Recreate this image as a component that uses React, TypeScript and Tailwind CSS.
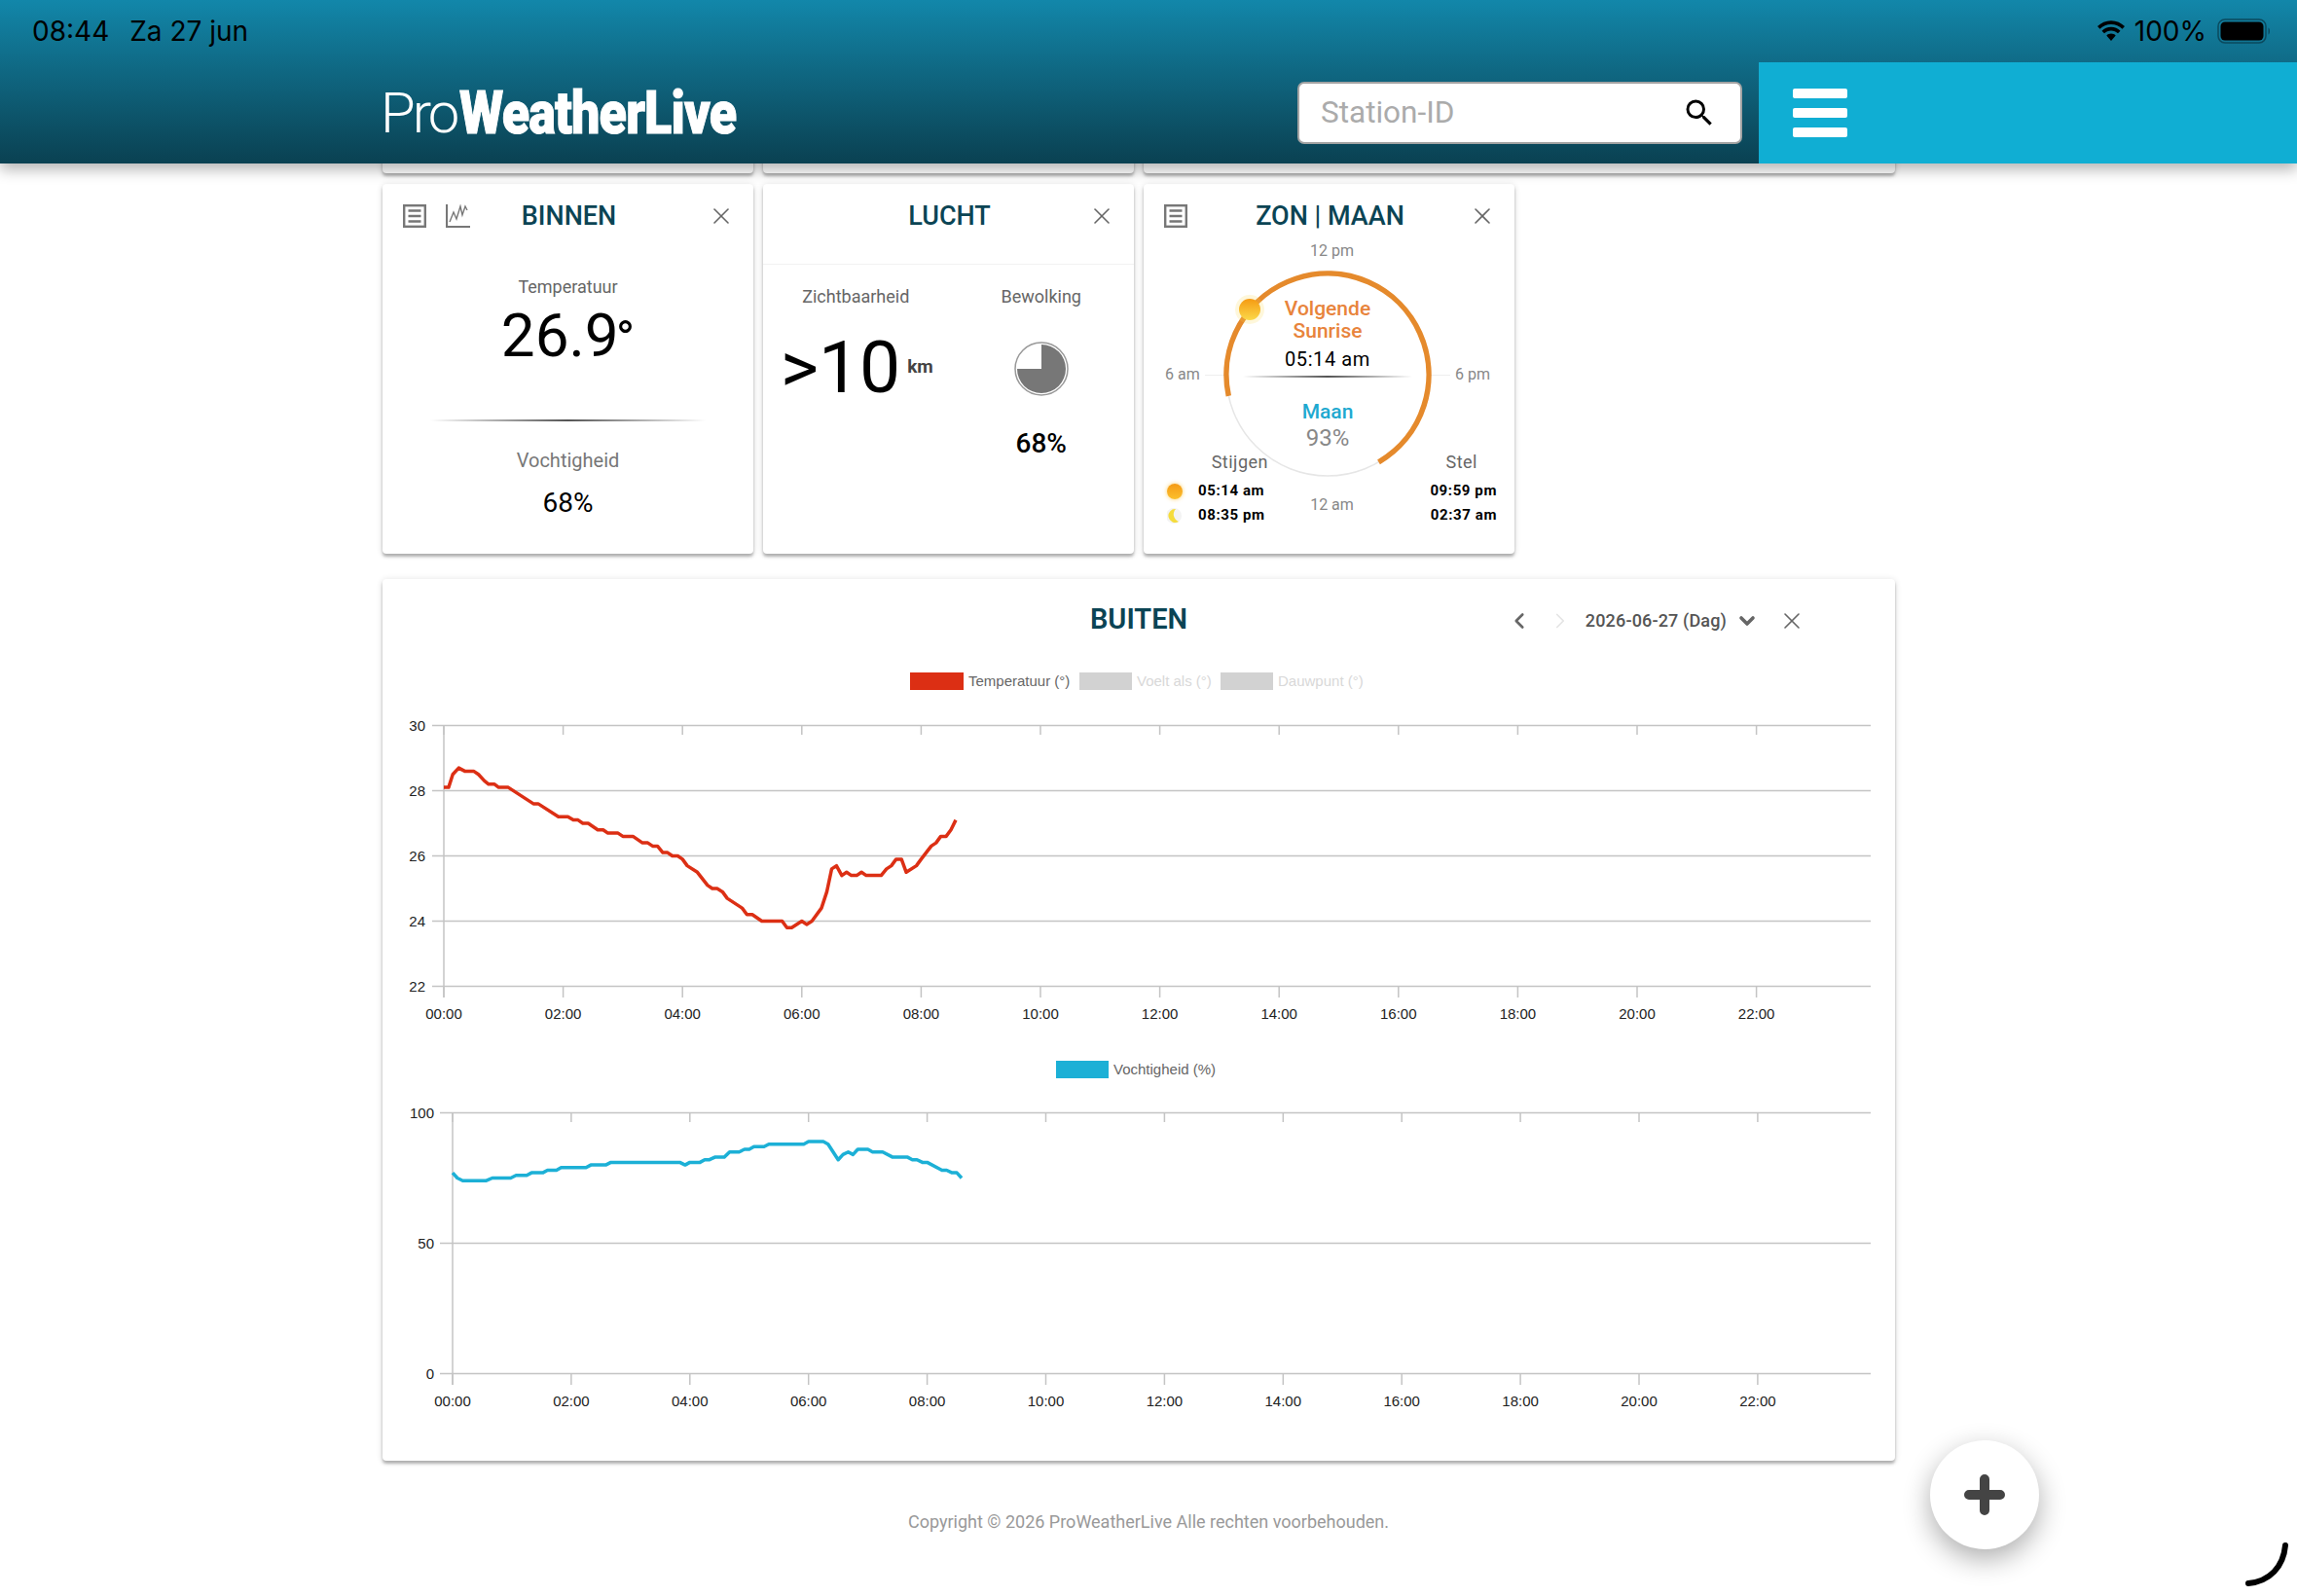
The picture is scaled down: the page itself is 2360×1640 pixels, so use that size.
import { X, ChevronLeft, ChevronRight, ChevronDown } from "lucide-react"
import { MdSearch } from "react-icons/md"

const tempData: [number, number][] = [
  [0, 28.1], [0.08, 28.1], [0.15, 28.5], [0.25, 28.7], [0.35, 28.6], [0.5, 28.6], [0.58, 28.5], [0.68, 28.3], [0.75, 28.2], [0.85, 28.2],
  [0.92, 28.1], [1.08, 28.1], [1.5, 27.6], [1.58, 27.6], [1.92, 27.2], [2.08, 27.2], [2.17, 27.1], [2.25, 27.1], [2.33, 27], [2.42, 27],
  [2.58, 26.8], [2.67, 26.8], [2.75, 26.7], [2.92, 26.7], [3, 26.6], [3.17, 26.6], [3.33, 26.4], [3.42, 26.4], [3.5, 26.3], [3.58, 26.3],
  [3.67, 26.1], [3.75, 26.1], [3.83, 26], [3.92, 26], [4, 25.9], [4.08, 25.7], [4.25, 25.5], [4.42, 25.1], [4.5, 25], [4.58, 25],
  [4.67, 24.9], [4.75, 24.7], [5, 24.4], [5.08, 24.2], [5.17, 24.2], [5.33, 24], [5.67, 24], [5.75, 23.8], [5.83, 23.8], [6, 24],
  [6.08, 23.9], [6.17, 24], [6.33, 24.4], [6.42, 24.9], [6.5, 25.6], [6.58, 25.7], [6.67, 25.4], [6.75, 25.5], [6.83, 25.4], [6.92, 25.4],
  [7, 25.5], [7.08, 25.4], [7.33, 25.4], [7.42, 25.6], [7.5, 25.7], [7.58, 25.9], [7.67, 25.9], [7.75, 25.5], [7.92, 25.7], [8, 25.9],
  [8.17, 26.3], [8.25, 26.4], [8.33, 26.6], [8.42, 26.6], [8.5, 26.8], [8.58, 27.1],
]

const humidityData: [number, number][] = [
  [0, 77], [0.08, 75], [0.17, 74], [0.57, 74], [0.67, 75], [0.98, 75], [1.07, 76], [1.25, 76], [1.33, 77], [1.52, 77],
  [1.6, 78], [1.75, 78], [1.83, 79], [2.25, 79], [2.33, 80], [2.58, 80], [2.67, 81], [3.83, 81], [3.92, 80], [4, 81],
  [4.17, 81], [4.25, 82], [4.33, 82], [4.42, 83], [4.58, 83], [4.67, 85], [4.83, 85], [4.92, 86], [5, 86], [5.08, 87],
  [5.25, 87], [5.33, 88], [5.92, 88], [6, 89], [6.25, 89], [6.33, 88], [6.5, 82], [6.58, 84], [6.67, 85], [6.75, 84],
  [6.83, 86], [7, 86], [7.08, 85], [7.25, 85], [7.42, 83], [7.67, 83], [7.75, 82], [7.83, 82], [7.92, 81], [8, 81],
  [8.25, 78], [8.33, 78], [8.42, 77], [8.5, 77], [8.58, 75],
]

const hourLabels = ["00:00", "02:00", "04:00", "06:00", "08:00", "10:00", "12:00", "14:00", "16:00", "18:00", "20:00", "22:00"]

const cardClass =
  "rounded-[4px] bg-white shadow-[0_3px_3px_0_rgba(0,0,0,0.26),0_1px_7px_0_rgba(0,0,0,0.14)]"

function DocIcon() {
  return (
    <svg width="24" height="24" viewBox="0 0 24 24" fill="none" stroke="#777" strokeWidth="2.4">
      <rect x="1.200" y="1.200" width="21.600" height="21.600" />
      <path d="M5.500 6.500h13M5.500 12h13M5.500 17.500h13" />
    </svg>
  )
}

function GraphIcon() {
  return (
    <svg width="25" height="24" viewBox="0 0 25 24" fill="none" stroke="#777">
      <path d="M1 0v23h24" strokeWidth="2.2" />
      <path d="M4 18l4-10 3 7 4-13 2 9 3-9 2 4" strokeWidth="1.4" />
    </svg>
  )
}

function CardHeader({ title, icons }: { title: string; icons?: React.ReactNode }) {
  return (
    <div className="grid h-[66px] grid-cols-[1fr_auto_1fr] items-center pl-[21px] pr-[19px]">
      <div className="flex items-center gap-[20px]">{icons}</div>
      <h2 className="text-[27px] leading-none font-medium text-[#0b4454]">{title}</h2>
      <div className="flex justify-end">
        <X size={28} strokeWidth={1.4} color="#666" />
      </div>
    </div>
  )
}

function BinnenCard() {
  return (
    <section className={`${cardClass} h-[380px]`}>
      <CardHeader title="BINNEN" icons={<><DocIcon /><GraphIcon /></>} />
      <div className="flex flex-col items-center pt-[29px]">
        <p className="text-[18px] leading-[22px] text-[#666]">Temperatuur</p>
        <p className="mt-[9px] text-[62px] leading-[60px] text-black">
          26.9<span className="-ml-[3px] text-[52px]">°</span>
        </p>
        <div className="mt-[52px] h-[2px] w-[283px] bg-gradient-to-r from-transparent via-[#555] to-transparent" />
        <p className="mt-[29px] text-[20px] leading-[22px] text-[#777]">Vochtigheid</p>
        <p className="mt-[17px] text-[28px] leading-[32px] text-black">68%</p>
      </div>
    </section>
  )
}

function LuchtCard() {
  return (
    <section className={`${cardClass} h-[380px]`}>
      <div className="h-[83px] border-b border-[#f2f2f2]">
        <CardHeader title="LUCHT" />
      </div>
      <div className="grid grid-cols-2 pt-[22px]">
        <div className="flex flex-col items-center">
          <p className="text-[18px] leading-[22px] text-[#666]">Zichtbaarheid</p>
          <div className="mt-[23px] flex items-center gap-[7px] pl-[2px]">
            <span className="text-[75px] leading-[76px] text-black">&gt;10</span>
            <span className="text-[19px] font-bold text-[#444]">km</span>
          </div>
        </div>
        <div className="flex flex-col items-center">
          <p className="text-[18px] leading-[22px] text-[#666]">Bewolking</p>
          <svg className="mt-[35px]" width="56" height="56" viewBox="-28 -28 56 56">
            <circle r="27" fill="#fff" stroke="#999" strokeWidth="1.5" />
            <path d="M0 0V-25A25 25 0 1 1 -25 0Z" fill="#777" />
          </svg>
          <p className="mt-[33px] text-[28px] leading-[32px] font-medium text-black">68%</p>
        </div>
      </div>
    </section>
  )
}

function SunDial() {
  return (
    <div className="relative flex h-[210px] w-[210px] flex-col items-center">
      <svg className="absolute inset-0 overflow-visible" width="210" height="210" viewBox="-105 -105 210 210">
        <defs>
          <linearGradient id="sunFill" x1="0" y1="0" x2="0" y2="1">
            <stop offset="0" stopColor="#f59a12" />
            <stop offset="1" stopColor="#fbd94a" />
          </linearGradient>
        </defs>
        <circle r="104" fill="none" stroke="#e6e6e6" strokeWidth="1.5" />
        <path d="M-101.700 21.900A104 104 0 1 1 52.500 89.800" fill="none" stroke="#e58a2c" strokeWidth="5.500" />
        <circle cx="-80" cy="-67" r="15" fill="#fbd94a" opacity="0.2" />
        <circle cx="-80" cy="-67" r="11" fill="url(#sunFill)" />
      </svg>
      <p className="relative mt-[26px] text-center text-[21px] leading-[23px] font-medium text-[#e8843c]">
        Volgende
        <br />
        Sunrise
      </p>
      <p className="relative mt-[4px] text-[20px] leading-[26px] tracking-[0.6px] text-black">05:14 am</p>
      <div className="relative mt-[4px] h-[1.5px] w-[174px] bg-gradient-to-r from-transparent via-[#555] to-transparent" />
      <p className="relative mt-[23px] text-[21px] leading-[24px] font-medium text-[#1fa9d0]">Maan</p>
      <p className="relative text-[24px] leading-[30px] text-[#888]">93%</p>
    </div>
  )
}

function SunMoonCard() {
  return (
    <section className={`${cardClass} flex h-[380px] flex-col`}>
      <CardHeader title="ZON | MAAN" icons={<DocIcon />} />
      <p className="-mt-[7px] pl-[6px] text-center text-[16px] leading-[20px] text-[#888]">12 pm</p>
      <div className="mt-[12px] flex items-center">
        <div className="flex flex-1 items-center gap-[5px] pl-[22px]">
          <span className="text-[16px] text-[#888]">6 am</span>
          <span className="h-px flex-1 bg-[#eee]" />
        </div>
        <SunDial />
        <div className="flex flex-1 items-center gap-[5px] pr-[25px]">
          <span className="h-px flex-1 bg-[#eee]" />
          <span className="text-[16px] text-[#888]">6 pm</span>
        </div>
      </div>
      <div className="relative -mt-[26px] grid grid-cols-[1fr_auto_1fr] pl-[24px] pr-[18px]">
        <div>
          <p className="w-[104px] text-right text-[18px] leading-[22px] tracking-[0.5px] text-[#666]">Stijgen</p>
          <div className="mt-[6px] flex h-[25px] items-center gap-[16px]">
            <span className="h-[16px] w-[16px] rounded-full bg-gradient-to-b from-[#f59a12] to-[#fbc02d] shadow-[0_0_4px_rgba(251,190,40,0.7)]" />
            <span className="text-[15px] font-bold tracking-[0.6px] text-black">05:14 am</span>
          </div>
          <div className="flex h-[25px] items-center gap-[16px]">
            <svg width="16" height="16" viewBox="0 0 16 16">
              <circle cx="7" cy="8" r="8" fill="#e8e8e8" opacity="0.5" />
              <path d="M9 1A7 7 0 1 0 12 14A8 8 0 0 1 9 1Z" fill="#f5dc3c" />
            </svg>
            <span className="text-[15px] font-bold tracking-[0.6px] text-black">08:35 pm</span>
          </div>
        </div>
        <p className="mb-[13px] self-end text-[16px] leading-[20px] text-[#888]">12 am</p>
        <div className="flex flex-col items-end">
          <p className="pr-[20px] text-[18px] leading-[22px] tracking-[0.5px] text-[#666]">Stel</p>
          <p className="mt-[6px] flex h-[25px] items-center text-[15px] font-bold tracking-[0.6px] text-black">09:59 pm</p>
          <p className="flex h-[25px] items-center text-[15px] font-bold tracking-[0.6px] text-black">02:37 am</p>
        </div>
      </div>
    </section>
  )
}

type LegendItem = { x: number; w: number; label: string; color: string; text: string }

function Chart({
  top,
  height,
  plotLeft,
  axisLeft,
  pitch,
  yTop,
  yBottom,
  yTicks,
  yLabelX,
  legend,
  legendY,
  data,
  toY,
  color,
}: {
  top: number
  height: number
  plotLeft: number
  axisLeft: number
  pitch: number
  yTop: number
  yBottom: number
  yTicks: { y: number; label: string }[]
  yLabelX: number
  legend: LegendItem[]
  legendY: number
  data: [number, number][]
  toY: (v: number) => number
  color: string
}) {
  const points = data.map(([h, v]) => `${(plotLeft + (h * pitch) / 2).toFixed(1)},${toY(v).toFixed(1)}`).join(" ")
  const tickXs = hourLabels.map((_, i) => plotLeft + i * pitch)
  return (
    <svg className="block" width="1554" height={height} viewBox={`393 ${top} 1554 ${height}`} fontFamily="'Liberation Sans', Arial, sans-serif">
      {legend.map((l) => (
        <g key={l.label}>
          <rect x={l.x} y={legendY} width={l.w} height="18" fill={l.color} />
          <text x={l.x + l.w + 5} y={legendY + 14} fontSize="15" fill={l.text}>
            {l.label}
          </text>
        </g>
      ))}
      {yTicks.map((t) => (
        <g key={t.label}>
          <line x1={axisLeft} x2="1922" y1={t.y} y2={t.y} stroke="#c4c4c4" strokeWidth="1.5" />
          <text x={yLabelX} y={t.y + 5} textAnchor="end" fontSize="15" fill="#222">
            {t.label}
          </text>
        </g>
      ))}
      <line x1={plotLeft} x2={plotLeft} y1={yTop} y2={yBottom + 11} stroke="#c4c4c4" strokeWidth="1.5" />
      {tickXs.map((x, i) => (
        <g key={x}>
          <line x1={x} x2={x} y1={yTop} y2={yTop + 10} stroke="#c4c4c4" strokeWidth="1.5" />
          <line x1={x} x2={x} y1={yBottom} y2={yBottom + 11} stroke="#c4c4c4" strokeWidth="1.5" />
          <text x={x} y={yBottom + 33} textAnchor="middle" fontSize="15" fill="#222">
            {hourLabels[i]}
          </text>
        </g>
      ))}
      <polyline points={points} fill="none" stroke={color} strokeWidth="3.5" strokeLinejoin="round" />
    </svg>
  )
}

function BuitenCard() {
  return (
    <section className={`${cardClass} mt-[26px] h-[906px]`}>
      <div className="grid h-[85px] grid-cols-[1fr_auto_1fr] items-center">
        <div />
        <h2 className="pb-[3px] text-[29px] leading-none font-semibold text-[#0b4454]">BUITEN</h2>
        <div className="flex items-center justify-end pr-[92px]">
          <ChevronLeft size={26} strokeWidth={2.4} color="#666" />
          <ChevronRight size={26} strokeWidth={1.6} color="#e4e4e4" className="ml-[16px]" />
          <span className="ml-[13px] text-[18px] font-medium tracking-[0.15px] text-[#555]">2026-06-27 (Dag)</span>
          <ChevronDown size={24} strokeWidth={3.6} color="#666" className="ml-[9px]" />
          <X size={28} strokeWidth={1.4} color="#666" className="ml-[20px]" />
        </div>
      </div>
      <Chart
        top={680}
        height={390}
        plotLeft={456}
        axisLeft={444}
        pitch={122.6}
        yTop={745}
        yBottom={1014}
        yTicks={[
          { y: 745.5, label: "30" },
          { y: 812.5, label: "28" },
          { y: 879.5, label: "26" },
          { y: 946.5, label: "24" },
          { y: 1013.5, label: "22" },
        ]}
        yLabelX={437}
        legendY={691}
        legend={[
          { x: 935, w: 55, label: "Temperatuur (°)", color: "#dc2f14", text: "#666" },
          { x: 1109, w: 54, label: "Voelt als (°)", color: "#d2d2d2", text: "#d8d8d8" },
          { x: 1254, w: 54, label: "Dauwpunt (°)", color: "#d2d2d2", text: "#d8d8d8" },
        ]}
        data={tempData}
        toY={(v) => 812.5 + (28 - v) * 33.5}
        color="#dc2f14"
      />
      <Chart
        top={1070}
        height={390}
        plotLeft={465}
        axisLeft={452}
        pitch={121.9}
        yTop={1143}
        yBottom={1412}
        yTicks={[
          { y: 1143.5, label: "100" },
          { y: 1277.5, label: "50" },
          { y: 1411.5, label: "0" },
        ]}
        yLabelX={446}
        legendY={1090}
        legend={[{ x: 1085, w: 54, label: "Vochtigheid (%)", color: "#1cb0d6", text: "#666" }]}
        data={humidityData}
        toY={(v) => 1143.5 + (100 - v) * 2.68}
        color="#1cb0d6"
      />
    </section>
  )
}

function StatusBar() {
  return (
    <div className="flex h-[64px] items-center justify-between pl-[33px] pr-[26px] font-['Inter',sans-serif] text-[28px] text-black">
      <div className="flex gap-[21px]">
        <span>08:44</span>
        <span>Za 27 jun</span>
      </div>
      <div className="flex items-center gap-[9px]">
        <svg width="30" height="22" viewBox="0 0 30 22" fill="#000">
          <path d="M15 4C19.500 4 23.500 5.800 26.500 8.700L29 6C25.300 2.400 20.400 0.200 15 0.200S4.700 2.400 1 6L3.500 8.700C6.500 5.800 10.500 4 15 4Z" />
          <path d="M15 10.500C17.800 10.500 20.200 11.600 22 13.300L24.500 10.700C22 8.300 18.700 6.800 15 6.800S8 8.300 5.500 10.700L8 13.300C9.800 11.600 12.200 10.500 15 10.500Z" />
          <path d="M15 13.500C13.200 13.500 11.500 14.200 10.300 15.400L15 21L19.700 15.400C18.500 14.200 16.800 13.500 15 13.500Z" />
        </svg>
        <span>100%</span>
        <svg width="56" height="26" viewBox="0 0 56 26" className="ml-[2px]">
          <rect x="1" y="1" width="49" height="24" rx="7" fill="none" stroke="#0a4a5e" strokeWidth="1.500" />
          <rect x="3.500" y="3.500" width="44" height="19" rx="4.500" fill="#000" />
          <path d="M52.500 9.500c2 .8 2 6.200 0 7z" fill="#0a4a5e" />
        </svg>
      </div>
    </div>
  )
}

function Header() {
  return (
    <header className="absolute inset-x-0 top-0 z-20 h-[168px] bg-gradient-to-b from-[#1287aa] to-[#0a4152] shadow-[0_6px_14px_rgba(0,0,0,0.3)]">
      <StatusBar />
      <div className="flex h-[104px] items-stretch">
        <div className="ml-[391px] flex w-[942px] items-center overflow-visible text-white">
          <span className="text-[58px] leading-none font-light tracking-[-3px]">Pro</span>
          <span className="ml-[3px] inline-block origin-left scale-x-[0.84] text-[62px] leading-none font-black tracking-[-1px] [-webkit-text-stroke:1px_#fff]">WeatherLive</span>
        </div>
        <div className="flex h-[64px] w-[457px] items-center justify-between self-center rounded-[7px] border-[2px] border-[#a3a3a3] bg-white pl-[22px] pr-[24px]">
          <span className="text-[31.5px] text-[#ababab]">Station-ID</span>
          <MdSearch size={36} color="#000" />
        </div>
        <button className="ml-[17px] flex flex-1 flex-col justify-center gap-[10px] bg-[#10aed3] pl-[35px]">
          <span className="h-[10px] w-[56px] rounded-[2px] bg-white" />
          <span className="h-[10px] w-[56px] rounded-[2px] bg-white" />
          <span className="h-[10px] w-[56px] rounded-[2px] bg-white" />
        </button>
      </div>
    </header>
  )
}

export default function App() {
  return (
    <div className="relative h-[1640px] w-full overflow-hidden bg-white font-['Roboto',sans-serif]">
      <Header />
      <main className="ml-[393px] w-[1554px]">
        <div className="grid grid-cols-[381px_381px_772px] gap-x-[10px]">
          <div className={`${cardClass} h-[178px]`} />
          <div className={`${cardClass} h-[178px]`} />
          <div className={`${cardClass} h-[178px]`} />
        </div>
        <div className="mt-[11px] grid grid-cols-[381px_381px_381px] gap-x-[10px]">
          <BinnenCard />
          <LuchtCard />
          <SunMoonCard />
        </div>
        <BuitenCard />
        <footer className="mt-[53px] pl-[20px] text-center text-[18px] leading-[20px] text-[#999]">
          Copyright © 2026 ProWeatherLive Alle rechten voorbehouden.
        </footer>
      </main>
      <button className="absolute left-[1983px] top-[1480px] flex h-[112px] w-[112px] items-center justify-center rounded-full bg-white shadow-[0_10px_28px_rgba(0,0,0,0.32)]">
        <svg width="42" height="42" viewBox="0 0 42 42" stroke="#444" strokeWidth="10" strokeLinecap="round">
          <path d="M21 5v32M5 21h32" />
        </svg>
      </button>
      <svg className="absolute left-[2300px] top-[1580px]" width="56" height="56" viewBox="0 0 56 56" fill="none" stroke="#000" strokeWidth="6" strokeLinecap="round">
        <path d="M48 8C46 30 32 45 10 47" />
      </svg>
    </div>
  )
}
